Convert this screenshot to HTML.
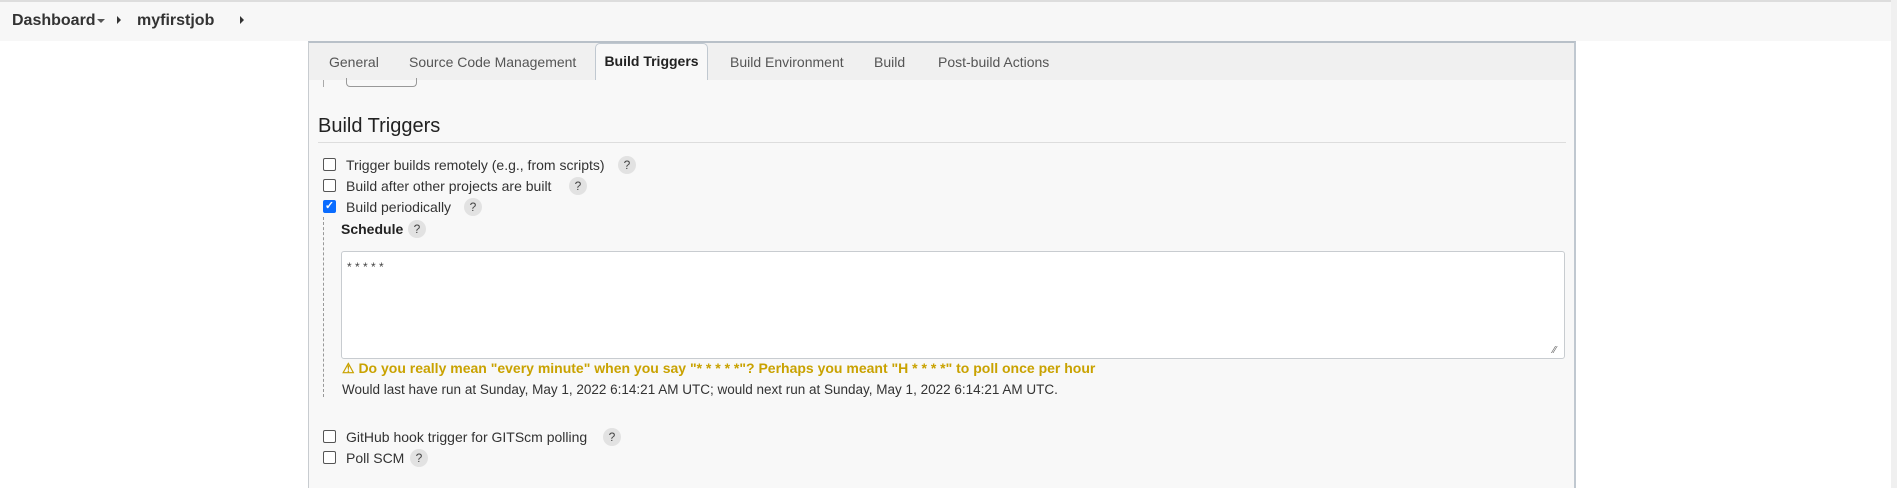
<!DOCTYPE html>
<html><head><meta charset="utf-8"><style>
*{margin:0;padding:0;box-sizing:border-box}
body{width:1897px;height:488px;background:#fff;font-family:"Liberation Sans",sans-serif;color:#333;position:relative;overflow:hidden}
.a{position:absolute;white-space:nowrap}
.top{left:0;top:0;width:1891px;height:41px;background:#f7f7f7;border-top:2px solid #ddd}
.sb{left:1891px;top:0;width:6px;height:488px;background:#f0f0f0}
.panel{left:308px;top:41px;width:1268px;height:447px;background:#f8f8f8;border-left:1px solid #c8ccd0;border-right:2px solid #c0c8d0;border-top:2px solid #b8c0c8}
.tabbar{left:309px;top:43px;width:1265px;height:37px;background:#f0f0f0}
.tab{font-size:14px;color:#555;top:54px}
.act{left:595px;top:43px;width:113px;height:37px;background:#f8f8f8;border:1px solid #c0c8d0;border-bottom:none;border-radius:5px 5px 0 0;font-weight:bold;font-size:14px;color:#222;text-align:center;line-height:35px}
.cb{width:13px;height:13px;border:1px solid #555;border-radius:2px;background:#fff}
.lbl{font-size:14px;color:#333}
.q{width:18px;height:18px;border-radius:50%;background:#e2e2e2;font-size:12px;color:#444;text-align:center;line-height:18px}
</style></head><body>
<div class="a top"></div>
<div class="a sb"></div>
<div class="a" style="left:12px;top:12px;font-size:16px;font-weight:bold;color:#333">Dashboard</div>
<div class="a" style="left:97px;top:19px;width:0;height:0;border-left:4px solid transparent;border-right:4px solid transparent;border-top:4px solid #555"></div>
<div class="a" style="left:117px;top:16px;width:0;height:0;border-top:4px solid transparent;border-bottom:4px solid transparent;border-left:4px solid #333"></div>
<div class="a" style="left:137px;top:12px;font-size:16px;font-weight:bold;color:#333">myfirstjob</div>
<div class="a" style="left:240px;top:16px;width:0;height:0;border-top:4px solid transparent;border-bottom:4px solid transparent;border-left:4px solid #333"></div>

<div class="a panel"></div>
<div class="a tabbar"></div>
<div class="a tab" style="left:329px">General</div>
<div class="a tab" style="left:409px">Source Code Management</div>
<div class="a act">Build Triggers</div>
<div class="a tab" style="left:730px">Build Environment</div>
<div class="a tab" style="left:874px">Build</div>
<div class="a tab" style="left:938px">Post-build Actions</div>
<div class="a" style="left:346px;top:78px;width:71px;height:9px;border:1px solid #999;border-top:none;border-radius:0 0 4px 4px"></div>
<div class="a" style="left:323px;top:80px;width:1px;height:7px;background:#aaa"></div>

<div class="a" style="left:318px;top:115px;font-size:20px;color:#222">Build Triggers</div>
<div class="a" style="left:318px;top:142px;width:1248px;height:1px;background:#ddd"></div>

<div class="a cb" style="left:323px;top:158px"></div><div class="a lbl" style="left:346px;top:157px">Trigger builds remotely (e.g., from scripts)</div><div class="a q" style="left:618px;top:156px">?</div>
<div class="a cb" style="left:323px;top:179px"></div><div class="a lbl" style="left:346px;top:178px">Build after other projects are built</div><div class="a q" style="left:569px;top:177px">?</div>
<div class="a cb" style="left:323px;top:200px;background:#0a6cff;border-color:#0a6cff;color:#fff;font-size:11px;line-height:11px;text-align:center;font-weight:bold">✓</div><div class="a lbl" style="left:346px;top:199px">Build periodically</div><div class="a q" style="left:464px;top:198px">?</div>
<div class="a" style="left:323px;top:217px;height:180px;border-left:1px dashed #999"></div>
<div class="a lbl" style="left:341px;top:221px;font-weight:bold;color:#222">Schedule</div><div class="a q" style="left:408px;top:220px">?</div>
<div class="a" style="left:341px;top:251px;width:1224px;height:108px;background:#fff;border:1px solid #c8ccd0;border-radius:3px;font-size:12px;padding:8px 5px;color:#444">* * * * *</div>
<div class="a" style="left:1553px;top:345px;font-size:10px;color:#666">⁄⁄</div>
<div class="a" style="left:342px;top:360px;font-size:14px;font-weight:bold;color:#c9a200">⚠ Do you really mean "every minute" when you say "* * * * *"? Perhaps you meant "H * * * *" to poll once per hour</div>
<div class="a" style="left:342px;top:382px;font-size:13.5px;color:#333">Would last have run at Sunday, May 1, 2022 6:14:21 AM UTC; would next run at Sunday, May 1, 2022 6:14:21 AM UTC.</div>

<div class="a cb" style="left:323px;top:430px"></div><div class="a lbl" style="left:346px;top:429px">GitHub hook trigger for GITScm polling</div><div class="a q" style="left:603px;top:428px">?</div>
<div class="a cb" style="left:323px;top:451px"></div><div class="a lbl" style="left:346px;top:450px">Poll SCM</div><div class="a q" style="left:410px;top:449px">?</div>
</body></html>
